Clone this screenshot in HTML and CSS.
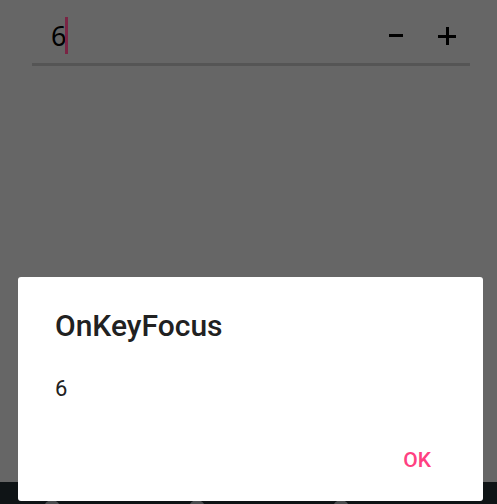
FILE: index.html
```html
<!DOCTYPE html>
<html>
<head>
<meta charset="utf-8">
<link rel="stylesheet" href="styles.css">
</head>
<body>
<div class="screen">
  <div class="content">
    <div class="field">
      <div class="value"><span class="num">6</span><span class="caret"></span></div>
      <div class="steppers">
        <span class="minus"></span>
        <span class="plus"></span>
      </div>
    </div>
  </div>
  <div class="navbar">
    <span class="nav-dot d1"></span>
    <span class="nav-dot d2"></span>
    <span class="nav-dot d3"></span>
  </div>
  <div class="dialog">
    <div class="dlg-title">OnKeyFocus</div>
    <div class="dlg-body">6</div>
    <div class="dlg-actions"><span class="ok">OK</span></div>
  </div>
</div>
</body>
</html>
```

FILE: styles.css
```css
html, body {
  margin: 0;
  padding: 0;
}
body {
  background: #666666;
  font-family: Roboto, "Liberation Sans", sans-serif;
}
.screen {
  position: relative;
  width: 497px;
  height: 504px;
  display: flex;
  flex-direction: column;
  overflow: hidden;
}
.content {
  flex: 1;
  padding: 17px 27px 0 32px;
}
.field {
  display: flex;
  align-items: flex-start;
  justify-content: space-between;
  height: 46px;
  border-bottom: 3px solid #555555;
}
.value {
  display: flex;
  align-items: flex-start;
  padding-left: 19px;
}
.num {
  font-family: "Noto Sans", sans-serif;
  font-size: 27px;
  line-height: 37px;
  color: #000;
  letter-spacing: -1px;
}
.caret {
  width: 3px;
  height: 37px;
  background: #7a2444;
  margin-left: 0;
}
.steppers {
  display: flex;
  align-items: center;
  height: 37px;
  padding-right: 14px;
}
.minus {
  width: 14px;
  height: 3px;
  background: #000;
  margin-right: 35px;
}
.plus {
  position: relative;
  width: 18px;
  height: 18px;
}
.plus::before, .plus::after {
  content: "";
  position: absolute;
  background: #000;
}
.plus::before {
  left: 0; right: 0; top: 8px; height: 3px;
}
.plus::after {
  top: 0; bottom: 0; left: 8px; width: 3px;
}
.navbar {
  height: 22px;
  background: #0f1416;
  position: relative;
}
.nav-dot {
  position: absolute;
  top: 18px;
  width: 16px;
  height: 16px;
  border-radius: 50%;
  background: #4a4d4f;
}
.d1 { left: 44px; }
.d2 { left: 189px; }
.d3 { left: 333px; }
.dialog {
  position: absolute;
  left: 18px;
  top: 277px;
  width: 465px;
  height: 224px;
  background: #ffffff;
  border-radius: 3px;
  box-sizing: border-box;
  padding: 32px 24px 0 37px;
  display: flex;
  flex-direction: column;
}
.dlg-title {
  font-size: 30px;
  font-weight: 500;
  color: #212121;
  line-height: 34px;
}
.dlg-body {
  margin-top: 32px;
  font-size: 22px;
  color: #212121;
  line-height: 28px;
}
.dlg-actions {
  display: flex;
  justify-content: flex-end;
  margin-top: 45px;
  padding-right: 28px;
}
.ok {
  font-size: 21px;
  font-weight: 500;
  color: #ff4081;
  line-height: 24px;
}
```
